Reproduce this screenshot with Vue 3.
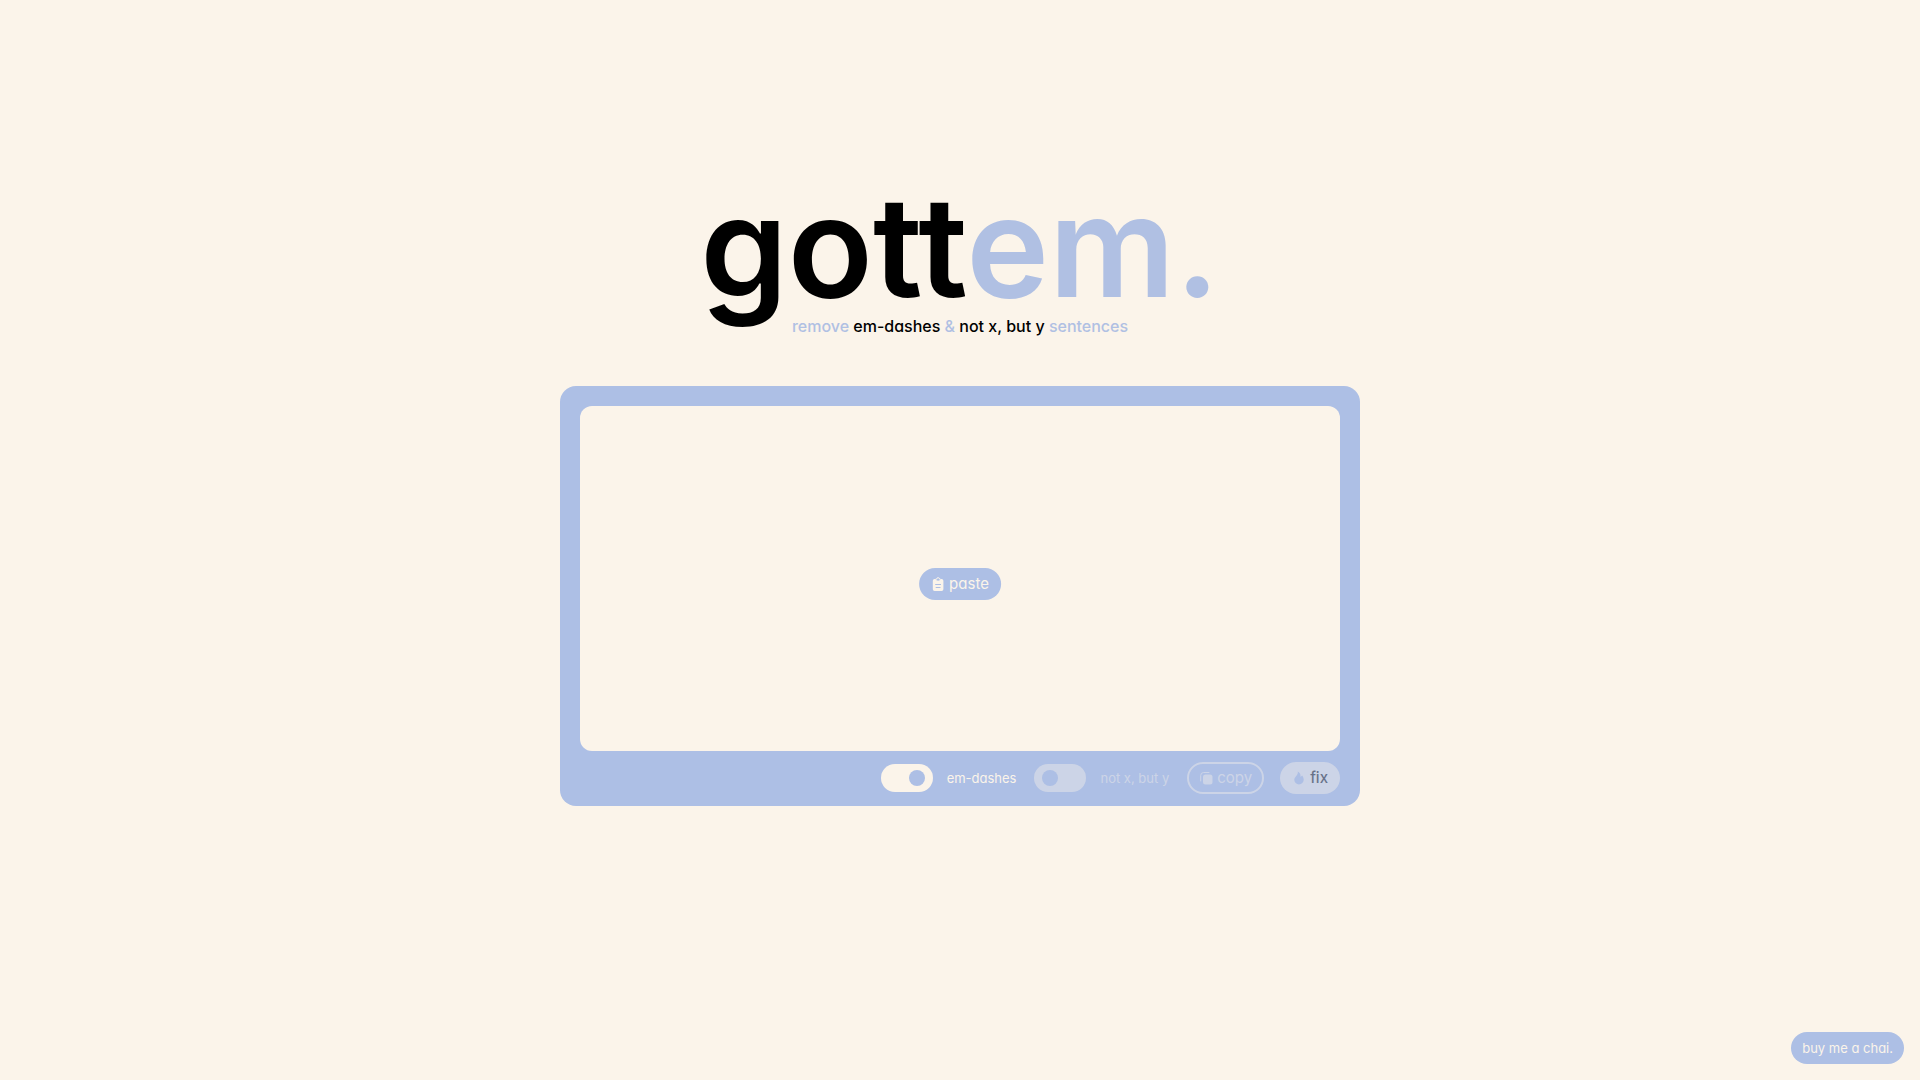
<template>
    <main class="page">
        <header class="header">
            <h1 class="logo">gott<span>em.</span></h1>
            <p class="tagline">remove <b>em-dashes</b> &amp; <b>not x, but y</b> sentences</p>
        </header>

        <section class="card">
            <div class="editor">
                <textarea v-model="text" class="editor-input" aria-label="text" spellcheck="false"></textarea>
                <button v-if="!text" class="btn btn-paste" type="button" @click="pasteText">
                    <svg class="icon" viewBox="0 0 14 16" aria-hidden="true">
                        <path fill="currentColor" d="M3.500 3h.9a2.700 2.300 0 0 0 5.200 0h.9a1.800 1.800 0 0 1 1.800 1.800v8.400a1.800 1.800 0 0 1-1.800 1.800h-7a1.800 1.800 0 0 1-1.800-1.800V4.800A1.800 1.800 0 0 1 3.500 3z" />
                        <path fill="none" stroke="currentColor" stroke-width="1" d="M4.500 3.200h1a1.500 1.500 0 0 1 3 0h1" />
                        <path fill="none" stroke="#adbfe5" stroke-width="1" stroke-linecap="round" d="M4.500 8.500h5M5 11.500h4" />
                    </svg>
                    paste
                </button>
            </div>

            <div class="toolbar">
                <label class="toggle">
                    <input v-model="dashes" type="checkbox" />
                    <span>em-dashes</span>
                </label>
                <label class="toggle faded">
                    <input v-model="notBut" type="checkbox" disabled />
                    <span>not x, but y</span>
                </label>
                <div class="actions">
                    <button class="btn btn-copy faded" type="button" @click="copyText">
                        <svg class="icon" viewBox="0 0 14 16" aria-hidden="true">
                            <rect x="4" y="4.500" width="9.500" height="10" rx="2.500" fill="currentColor" />
                            <path fill="none" stroke="currentColor" stroke-width="1" stroke-linecap="round" d="M1.700 11V5.500a3 3 0 0 1 3-3H10" />
                        </svg>
                        copy
                    </button>
                    <button class="btn btn-fix faded" type="button" @click="fixText">
                        <svg class="icon" viewBox="0 0 14 16" aria-hidden="true">
                            <path fill="#adbfe5" d="M5.800 1.500c2.600 1.500 3 3.400 2.600 5.200.8-.2 1.300-.6 1.700-1.200 1.100 1.300 1.600 2.700 1.600 4.300a4.700 4.700 0 0 1-9.400 0c0-1.600.9-2.700 1.900-3.900C5.300 4.700 6.200 3.500 5.800 1.500z" />
                        </svg>
                        fix
                    </button>
                </div>
            </div>
        </section>

        <a class="btn chai" href="#">buy me a chai.</a>
    </main>
</template>

<script setup>
import { ref } from 'vue';

const text = ref('');
const dashes = ref(true);
const notBut = ref(false);

async function pasteText() {
    text.value = await navigator.clipboard.readText();
}

function copyText() {
    navigator.clipboard.writeText(text.value);
}

function fixText() {
    if (dashes.value) {
        text.value = text.value.replace(/\s*\u2014\s*/g, ', ');
    }
}
</script>

<style>
    body{
        margin: 0;
        background-color: #fbf4ea;
    }
</style>

<style scoped>
    .page{
        box-sizing: border-box;
        min-height: 100vh;
        padding: 178px 20px 40px;
        display: flex;
        flex-direction: column;
        align-items: center;
        font-family: Inter, "Liberation Sans", sans-serif;
        /* single-storey a */
        font-feature-settings: "cv11";
    }
    .header{
        display: flex;
        flex-direction: column;
        align-items: center;
        margin-bottom: 48px;
    }
    .logo{
        margin: 0;
        font-size: 140px;
        line-height: 136px;
        font-weight: 600;
        color: #000;
    }
    .logo span, .tagline{
        color: #b0c0e3;
    }
    .tagline{
        margin: 0;
        font-size: 16px;
        line-height: 24px;
        font-weight: 500;
    }
    .tagline b{
        font-weight: 500;
        color: #000;
    }
    .card{
        box-sizing: border-box;
        width: 100%;
        max-width: 800px;
        padding: 20px 20px 12px;
        border-radius: 16px;
        background-color: #adbfe5;
    }
    .editor{
        position: relative;
        padding-bottom: 11px;
    }
    .editor-input{
        box-sizing: border-box;
        display: block;
        width: 100%;
        height: 345px;
        padding: 16px;
        border: 0;
        border-radius: 12px;
        outline: 0;
        resize: none;
        font: inherit;
        background-color: #fbf4ea;
    }
    .btn{
        box-sizing: border-box;
        height: 32px;
        padding: 0 12px;
        border: 0;
        border-radius: 16px;
        display: flex;
        align-items: center;
        gap: 4px;
        font: inherit;
        font-size: 15px;
        line-height: 16px;
        font-weight: 400;
        font-feature-settings: inherit;
        text-decoration: none;
        color: #fbf4ea;
        background-color: #adbfe5;
        cursor: pointer;
    }
    .icon{
        width: 14px;
        height: 16px;
    }
    .btn-paste{
        position: absolute;
        top: 50%;
        left: 50%;
        transform: translate(-50%, -50%);
    }
    .toolbar{
        display: flex;
        justify-content: flex-end;
        align-items: center;
        gap: 18px;
    }
    .actions{
        display: flex;
        gap: 16px;
    }
    .toggle{
        display: flex;
        align-items: center;
        gap: 14px;
        font-size: 13px;
        line-height: 16px;
        color: #fbf4ea;
    }
    .toggle input{
        appearance: none;
        box-sizing: border-box;
        width: 52px;
        height: 28px;
        margin: 0;
        padding: 6px 8px;
        border-radius: 14px;
        display: flex;
        background-color: #fbf4ea;
    }
    .toggle input::before{
        content: "";
        width: 16px;
        height: 16px;
        border-radius: 50%;
        background-color: #adbfe5;
    }
    .toggle input:checked{
        justify-content: flex-end;
    }
    .faded{
        opacity: 0.4;
    }
    .btn-copy{
        padding: 0 10px;
        border: 2px solid #fbf4ea;
        background-color: transparent;
    }
    .btn-fix{
        font-weight: 500;
        color: #000;
        background-color: #fbf4ea;
    }
    .chai{
        position: fixed;
        right: 16px;
        bottom: 16px;
        padding: 0 11px;
        font-size: 13px;
    }
</style>
